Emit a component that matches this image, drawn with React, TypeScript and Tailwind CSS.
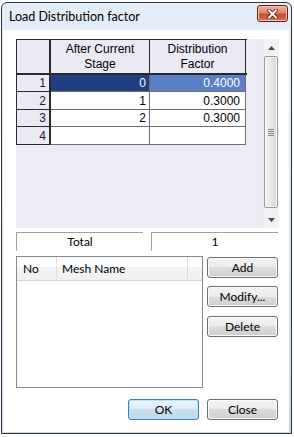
import React from "react";

const rows = [
  { no: "1", stage: "0", factor: "0.4000", selected: true },
  { no: "2", stage: "1", factor: "0.3000", selected: false },
  { no: "3", stage: "2", factor: "0.3000", selected: false },
  { no: "4", stage: "", factor: "", selected: false },
];
const rowHeights = ["h-[17px]", "h-[18px]", "h-[17px]", "h-[18px]"];

const dlgFont = { fontFamily: 'Lato, "Noto Sans", sans-serif' };
const gridFont = { fontFamily: '"Liberation Sans", Arial, sans-serif' };

function VistaButton({ label, isDefault = false }: { label: string; isDefault?: boolean }) {
  return (
    <button
      className={`w-[71px] h-[21px] rounded-[3px] border text-[12px] leading-none text-black flex items-center justify-center ${
        isDefault
          ? "border-[#3c7fb1] bg-[linear-gradient(to_bottom,#eaf4fc_0%,#dcebf7_50%,#c9e0f0_50%,#bcd6ea_100%)] shadow-[inset_0_0_0_1px_#b8e4fa]"
          : "border-[#707070] bg-[linear-gradient(to_bottom,#f2f2f2_0%,#ebebeb_50%,#dddddd_50%,#cfcfcf_100%)] shadow-[inset_0_0_0_1px_#fbfbfb]"
      }`}
      style={dlgFont}
    >
      {label}
    </button>
  );
}

export default function App() {
  return (
    <div className="w-[294px] h-[437px] bg-white pl-[1px] pt-[2px]">
      <div className="w-[291px] h-[432px] flex flex-col border border-[#30353d] rounded-t-[6px] overflow-hidden bg-gradient-to-b from-[#e4eef9] to-[#c4d8ee]">
        {/* title bar */}
        <div className="h-[27px] flex items-start justify-between pl-[7px] pr-[3px] shrink-0">
          <span className="mt-[6px] text-[12.5px] leading-[15px] text-black" style={dlgFont}>
            Load Distribution factor
          </span>
          <button className="mt-[2px] w-[31px] h-[17px] rounded-[3px] border border-[#6b2016] bg-[linear-gradient(to_bottom,#eab1a3_0%,#dd8571_45%,#c94b31_55%,#d7704f_100%)] shadow-[inset_0_0_0_1px_#f1c3b6] flex items-center justify-center">
            <svg width="11" height="10" viewBox="0 0 11 10">
              <path d="M2 1.5 L9 8.5 M9 1.5 L2 8.5" stroke="#5a1a10" strokeWidth="3.6" strokeLinecap="square" />
              <path d="M2 1.5 L9 8.5 M9 1.5 L2 8.5" stroke="#ffffff" strokeWidth="2" strokeLinecap="square" />
            </svg>
          </button>
        </div>

        {/* client area */}
        <div className="flex-1 ml-[1px] mr-[2px] mb-[1px] bg-white pl-[13px] pt-[9px] flex flex-col">
          {/* grid */}
          <div className="w-[263px] h-[189px] flex bg-[#ececf4]" style={gridFont}>
            <div className="w-[231px] self-start border-t border-l border-[#2a2a2a] text-[12px] text-black">
              <div className="flex h-[35px] border-b-2 border-[#2a2a2a] bg-[#eaeaf4]">
                <div className="w-[34px] border-r-2 border-[#2a2a2a]" />
                <div className="w-[99px] border-r border-[#2a2a2a] flex items-center justify-center text-center leading-[15px]">
                  After Current
                  <br />
                  Stage
                </div>
                <div className="w-[96px] border-r border-[#2a2a2a] flex items-center justify-center text-center leading-[15px]">
                  Distribution
                  <br />
                  Factor
                </div>
              </div>
              {rows.map((r, i) => (
                <div key={r.no} className={`flex ${rowHeights[i]}`}>
                  <div className="w-[34px] border-r-2 border-b border-[#2a2a2a] bg-[#eaeaf4] flex items-center justify-end pr-[3px] text-[#1a1a3a]">
                    {r.no}
                  </div>
                  <div
                    className={`w-[99px] border-r border-b border-[#6e6e6e] flex items-center justify-end pr-[3px] ${
                      r.selected ? "bg-[#213f80] text-white" : "bg-white"
                    }`}
                  >
                    {r.stage}
                  </div>
                  <div
                    className={`w-[96px] border-r border-b border-[#6e6e6e] flex items-center justify-end pr-[5px] ${
                      r.selected ? "bg-[#5b7fc6] text-white" : "bg-white"
                    }`}
                  >
                    {r.factor}
                  </div>
                </div>
              ))}
            </div>
            <div className="flex-1" />
            {/* scrollbar */}
            <div className="w-[17px] flex flex-col bg-[#f2f2f6] border-l border-[#e4e4ea]">
              <div className="h-[17px] flex items-center justify-center">
                <svg width="7" height="4" viewBox="0 0 7 4">
                  <path d="M3.5 0 L7 4 L0 4 Z" fill="#4a4a4a" />
                </svg>
              </div>
              <div className="flex-1 pb-[3px] pl-[1px] pr-[1px]">
                <div className="h-full rounded-[2px] border border-[#9a9a9a] bg-[linear-gradient(to_right,#f4f4f4,#e6e6e6_50%,#d6d6d6)] shadow-[inset_0_0_0_1px_#fbfbfb] flex flex-col items-center justify-center gap-[1px]">
                  <div className="w-[6px] h-[1px] bg-[#8a8a8a]" />
                  <div className="w-[6px] h-[1px] bg-[#8a8a8a]" />
                  <div className="w-[6px] h-[1px] bg-[#8a8a8a]" />
                  <div className="w-[6px] h-[1px] bg-[#8a8a8a]" />
                </div>
              </div>
              <div className="h-[17px] flex items-center justify-center">
                <svg width="7" height="4" viewBox="0 0 7 4">
                  <path d="M0 0 L7 0 L3.5 4 Z" fill="#4a4a4a" />
                </svg>
              </div>
            </div>
          </div>

          {/* total row */}
          <div className="mt-[4px] flex gap-[8px] text-[12px] text-black" style={dlgFont}>
            <div className="w-[127px] h-[19px] border-t border-l border-[#a0a0a0] flex items-center justify-center">Total</div>
            <div className="w-[127px] h-[19px] border-t border-l border-[#a0a0a0] flex items-center justify-center">1</div>
          </div>

          {/* mesh list + buttons */}
          <div className="mt-[5px] flex" style={dlgFont}>
            <div className="w-[187px] h-[132px] border border-[#828790] bg-white">
              <div className="h-[24px] flex border-b border-[#d5d5d5] bg-[linear-gradient(to_bottom,#ffffff_0%,#ffffff_45%,#f3f4f6_45%,#eff0f2_100%)] text-[12px] text-black">
                <div className="w-[40px] border-r border-[#dedfe3] flex items-center pl-[6px]">No</div>
                <div className="w-[131px] border-r border-[#dedfe3] flex items-center pl-[5px]">Mesh Name</div>
                <div className="flex-1" />
              </div>
            </div>
            <div className="ml-[4px] pt-[1px] flex flex-col">
              <VistaButton label="Add" />
              <div className="mt-[8px]">
                <VistaButton label="Modify..." />
              </div>
              <div className="mt-[9px]">
                <VistaButton label="Delete" />
              </div>
            </div>
          </div>

          {/* OK / Close */}
          <div className="mt-[11px] w-[263px] flex justify-end gap-[8px] pr-[1px]">
            <VistaButton label="OK" isDefault />
            <VistaButton label="Close" />
          </div>
        </div>
      </div>
    </div>
  );
}
